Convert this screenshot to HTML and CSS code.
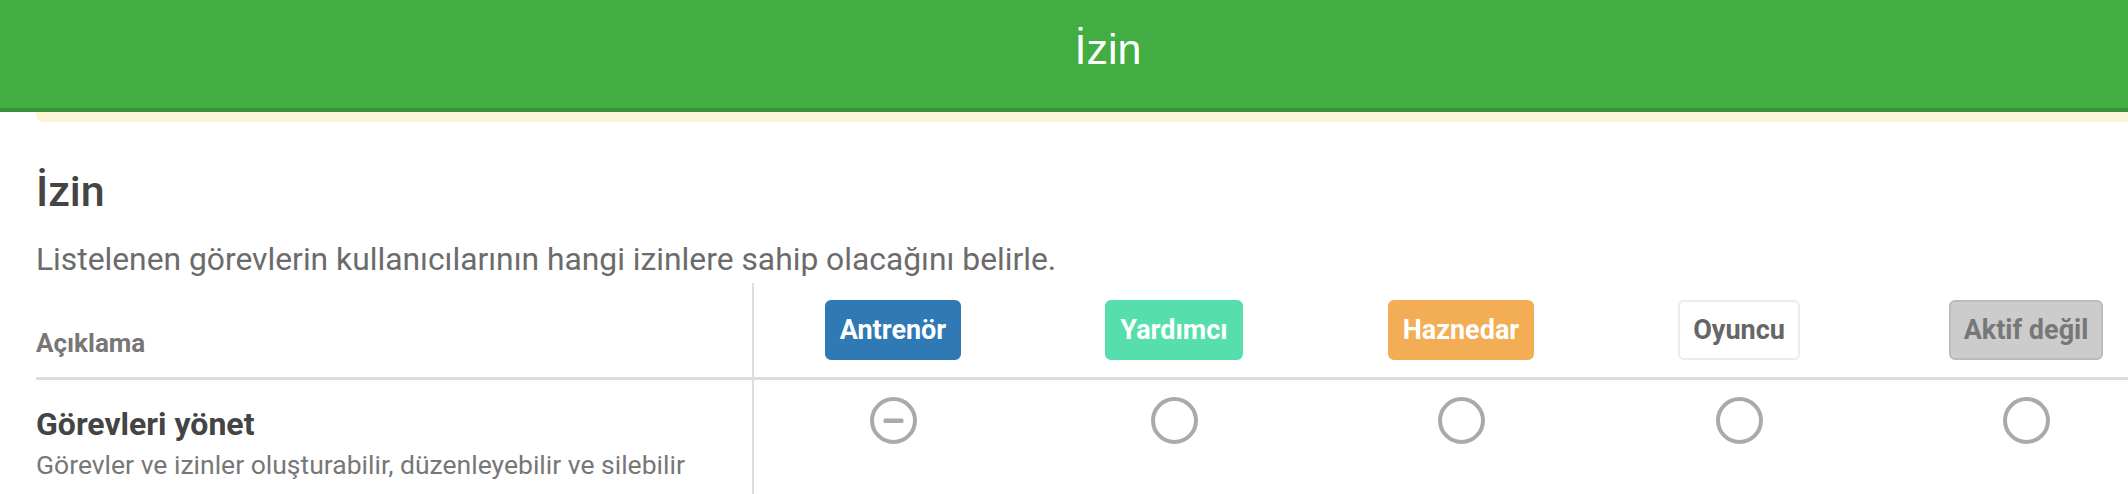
FILE: index.html
```html
<!DOCTYPE html>
<html lang="tr">
<head>
<meta charset="utf-8">
<title>İzin</title>
<link rel="stylesheet" href="styles.css">
</head>
<body>
<header class="topbar">
  <div class="topbar-title">İzin</div>
</header>
<div class="notice"></div>
<main class="content">
  <h1 class="page-title">İzin</h1>
  <p class="lead">Listelenen görevlerin kullanıcılarının hangi izinlere sahip olacağını belirle.</p>
  <div class="perm-table">
    <div class="perm-row perm-head">
      <div class="cell cell-desc head-label">Açıklama</div>
      <div class="cell cell-role"><span class="badge badge-coach">Antrenör</span></div>
      <div class="cell cell-role"><span class="badge badge-assist">Yardımcı</span></div>
      <div class="cell cell-role"><span class="badge badge-treasurer">Haznedar</span></div>
      <div class="cell cell-role"><span class="badge badge-player">Oyuncu</span></div>
      <div class="cell cell-role"><span class="badge badge-inactive">Aktif değil</span></div>
    </div>
    <div class="perm-row perm-body">
      <div class="cell cell-desc">
        <div class="perm-name">Görevleri yönet</div>
        <div class="perm-info">Görevler ve izinler oluşturabilir, düzenleyebilir ve silebilir</div>
      </div>
      <div class="cell cell-check">
        <svg class="check" width="47" height="47" viewBox="0 0 47 47"><circle cx="23.5" cy="23.5" r="21.5" fill="none" stroke="#aaaaaa" stroke-width="4"/><rect x="13.5" y="21.5" width="20" height="4.5" rx="1.5" fill="#aaaaaa"/></svg>
      </div>
      <div class="cell cell-check">
        <svg class="check" width="47" height="47" viewBox="0 0 47 47"><circle cx="23.5" cy="23.5" r="21.5" fill="none" stroke="#aaaaaa" stroke-width="4"/></svg>
      </div>
      <div class="cell cell-check">
        <svg class="check" width="47" height="47" viewBox="0 0 47 47"><circle cx="23.5" cy="23.5" r="21.5" fill="none" stroke="#aaaaaa" stroke-width="4"/></svg>
      </div>
      <div class="cell cell-check">
        <svg class="check" width="47" height="47" viewBox="0 0 47 47"><circle cx="23.5" cy="23.5" r="21.5" fill="none" stroke="#aaaaaa" stroke-width="4"/></svg>
      </div>
      <div class="cell cell-check">
        <svg class="check" width="47" height="47" viewBox="0 0 47 47"><circle cx="23.5" cy="23.5" r="21.5" fill="none" stroke="#aaaaaa" stroke-width="4"/></svg>
      </div>
    </div>
  </div>
</main>
</body>
</html>
```
FILE: styles.css
```css
html, body {
  margin: 0;
  padding: 0;
  overflow: hidden;
  background: #ffffff;
}
body {
  font-family: Roboto, "Liberation Sans", sans-serif;
  width: 2128px;
}
.topbar {
  box-sizing: border-box;
  background: #41ad43;
  border-bottom: 4px solid #37923a;
  height: 112px;
  padding: 28px 0 0 88px;
  text-align: center;
}
.topbar-title {
  font-family: "Liberation Sans", Arial, sans-serif;
  font-size: 43px;
  line-height: 42px;
  color: #ffffff;
}
.notice {
  margin-left: 36px;
  height: 10px;
  background: #fdf3d7;
  border-radius: 0 0 0 7px;
}
.content {
  padding-left: 36px;
}
.page-title {
  margin: 44px 0 0;
  font-size: 43px;
  line-height: 50px;
  font-weight: 500;
  color: #444444;
}
.lead {
  margin: 25px 0 0;
  font-size: 31.8px;
  line-height: 36px;
  color: #6b6b6b;
}
.perm-table {
  margin-top: 6px;
  width: 2144px;
}
.perm-row {
  display: grid;
  grid-template-columns: 718px 278px 284px 290px 266px 308px;
}
.perm-head {
  height: 97px;
  box-sizing: border-box;
  border-bottom: 3px solid #dddddd;
}
.cell-desc {
  box-sizing: border-box;
  border-right: 2px solid #dddddd;
}
.head-label {
  align-self: stretch;
  display: flex;
  align-items: flex-end;
  padding-bottom: 19px;
  font-size: 26px;
  line-height: 30px;
  font-weight: 700;
  color: #777777;
}
.cell-role {
  display: flex;
  align-items: center;
  justify-content: center;
}
.badge {
  display: inline-block;
  height: 60px;
  box-sizing: border-box;
  padding: 0 13px;
  border: 2px solid transparent;
  border-radius: 6px;
  font-size: 27px;
  line-height: 56px;
  font-weight: 700;
  color: #ffffff;
  white-space: nowrap;
}
.badge-coach {
  background: #2f79b5;
  border-color: #2f79b5;
}
.badge-assist {
  background: #56dfad;
  border-color: #56dfad;
}
.badge-treasurer {
  background: #f3ad55;
  border-color: #f3ad55;
}
.badge-player {
  background: #ffffff;
  border-color: #ebebeb;
  color: #666666;
}
.badge-inactive {
  background: #cccccc;
  border-color: #bbbbbb;
  color: #777777;
}
.perm-body {
  min-height: 120px;
}
.perm-body .cell-desc {
  padding-top: 28px;
}
.perm-name {
  font-size: 32px;
  line-height: 32px;
  font-weight: 700;
  color: #444444;
}
.perm-info {
  margin-top: 11px;
  font-size: 26.5px;
  line-height: 28px;
  color: #777777;
}
.cell-check {
  display: flex;
  justify-content: center;
  align-items: flex-start;
  padding-top: 17px;
}
.check {
  display: block;
}
```
